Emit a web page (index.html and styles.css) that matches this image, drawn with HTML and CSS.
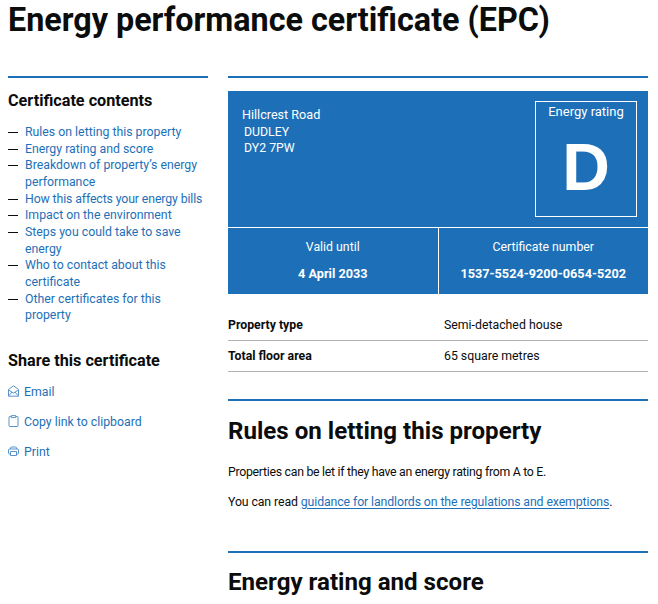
FILE: index.html
```html
<!DOCTYPE html>
<html lang="en">

<head>
    <meta charset="UTF-8">
    <meta name="viewport" content="width=device-width, initial-scale=1.0">
    <title>Energy performance certificate (EPC)</title>
    <link rel="stylesheet" href="styles.css">
</head>

<body>
    <h1 class="page-title">Energy performance certificate (EPC)</h1>

    <div class="columns">
        <nav class="sidebar">
            <h2 class="sidebar-title">Certificate contents</h2>
            <ul class="contents">
                <li><a href="#">Rules on letting this property</a></li>
                <li><a href="#">Energy rating and score</a></li>
                <li><a href="#">Breakdown of property’s energy performance</a></li>
                <li><a href="#" class="tight">How this affects your energy bills</a></li>
                <li><a href="#">Impact on the environment</a></li>
                <li><a href="#">Steps you could take to save energy</a></li>
                <li><a href="#">Who to contact about this certificate</a></li>
                <li><a href="#">Other certificates for this property</a></li>
            </ul>

            <h2 class="sidebar-title share-title">Share this certificate</h2>
            <ul class="share">
                <li>
                    <svg class="share-icon" viewBox="0 0 11 12" aria-hidden="true">
                        <path d="M0.5 4.5L5.5 0.8L10.5 4.5V11.2H0.5Z M0.5 5L5.5 8L10.5 5 M0.5 11L4 7 M10.5 11L7 7" />
                    </svg>
                    <a href="#">Email</a>
                </li>
                <li>
                    <svg class="share-icon" viewBox="0 0 11 12" aria-hidden="true">
                        <path d="M3.2 1.5H1.8Q1 1.5 1 2.3V10.7Q1 11.5 1.8 11.5H9.2Q10 11.5 10 10.7V2.3Q10 1.5 9.2 1.5H7.8 M3.2 0.6H7.8V2.6H3.2Z" />
                    </svg>
                    <a href="#">Copy link to clipboard</a>
                </li>
                <li>
                    <svg class="share-icon" viewBox="0 0 11 12" aria-hidden="true">
                        <path d="M2.5 4V3Q2.5 2 3.5 2H7.5Q8.5 2 8.5 3V4 M2.5 9H1.5Q0.5 9 0.5 8V5Q0.5 4 1.5 4H9.5Q10.5 4 10.5 5V8Q10.5 9 9.5 9H8.5 M2.5 6.5H8.5V10.5H2.5Z" />
                    </svg>
                    <a href="#">Print</a>
                </li>
            </ul>
        </nav>

        <main class="content">
            <div class="epc-panel">
                <div class="epc-top">
                    <p class="address">
                        <span class="address-first">Hillcrest Road</span><br>
                        DUDLEY<br>
                        DY2 7PW
                    </p>
                    <div class="rating-box">
                        <div class="rating-label">Energy rating</div>
                        <div class="rating-letter">D</div>
                    </div>
                </div>
                <div class="epc-bottom">
                    <div class="epc-cell">
                        <div>Valid until</div>
                        <strong>4 April 2033</strong>
                    </div>
                    <div class="epc-cell">
                        <div>Certificate number</div>
                        <strong>1537-5524-9200-0654-5202</strong>
                    </div>
                </div>
            </div>

            <dl class="summary">
                <div class="summary-row">
                    <dt>Property type</dt>
                    <dd>Semi-detached house</dd>
                </div>
                <div class="summary-row">
                    <dt>Total floor area</dt>
                    <dd>65 square metres</dd>
                </div>
            </dl>

            <section class="section">
                <h2 class="section-title">Rules on letting this property</h2>
                <p class="narrow">Properties can be let if they have an energy rating from A to E.</p>
                <p class="guidance">You can read <a href="#">guidance for landlords on the regulations and exemptions</a>.</p>
            </section>

            <section class="section">
                <h2 class="section-title">Energy rating and score</h2>
            </section>
        </main>
    </div>
</body>

</html>
```

FILE: styles.css
```css
body {
    margin: 0;
    padding: 0 10px 0 8px;
    background-color: #fff;
    color: #0b0c0c;
    font-family: Roboto, "Liberation Sans", sans-serif;
    font-size: 12.3px;
    line-height: 16.65px;
}

a {
    color: #1d70b8;
    text-decoration: none;
}

.tight {
    letter-spacing: -0.12px;
}

.page-title {
    margin: 0;
    height: 76px;
    font-size: 32.3px;
    line-height: 40px;
    font-weight: 700;
}

.columns {
    display: flex;
    gap: 20px;
}

.sidebar {
    flex: 0 0 200px;
    border-top: 2px solid #1d70b8;
}

.sidebar-title {
    margin: 13px 0 13px;
    font-size: 16.2px;
    line-height: 20px;
    font-weight: 700;
}

.share-title {
    margin-top: 27px;
}

.contents,
.share {
    margin: 0;
    padding: 0;
    list-style: none;
}

.contents li {
    position: relative;
    padding-left: 17px;
}

.contents li::before {
    content: '';
    position: absolute;
    left: 0;
    top: 8px;
    width: 10px;
    height: 1px;
    background-color: #0b0c0c;
}

.share {
    margin-top: -7px;
}

.share li {
    display: flex;
    align-items: center;
    height: 30px;
    gap: 5px;
}

.share-icon {
    flex: 0 0 11px;
    width: 11px;
    height: 12px;
    margin-top: -1px;
    fill: none;
    stroke: #5a94c8;
    stroke-width: 1;
}

.content {
    flex: 0 0 420px;
    border-top: 2px solid #1d70b8;
    padding-top: 13px;
}

.epc-panel {
    background-color: #1d70b8;
    color: #fff;
}

.epc-top {
    display: flex;
    justify-content: space-between;
    height: 137px;
    box-sizing: border-box;
    padding: 10px 11px 9px 14px;
    border-bottom: 1px solid #fff;
}

.address {
    margin: 6px 0 0;
    padding-left: 2px;
}

.address-first {
    margin-left: -2px;
    font-size: 12.6px;
}

.rating-box {
    width: 102px;
    height: 116px;
    box-sizing: border-box;
    border: 1px solid #fff;
    text-align: center;
}

.rating-label {
    margin-top: 2px;
    font-size: 13px;
}

.rating-letter {
    font-family: "Liberation Sans", sans-serif;
    font-size: 66px;
    line-height: 80px;
    font-weight: 700;
    margin-top: 6px;
}

.epc-bottom {
    display: flex;
    height: 66px;
}

.epc-cell {
    flex: 1;
    box-sizing: border-box;
    padding-top: 11px;
    text-align: center;
}

.epc-cell+.epc-cell {
    border-left: 1px solid #fff;
}

.epc-cell strong {
    display: block;
    margin-top: 10px;
    font-size: 12.7px;
}

.summary {
    margin: 15px 0 0;
}

.summary-row {
    display: flex;
    padding: 7.5px 0 6.8px;
    border-bottom: 1px solid #b1b4b6;
}

.summary-row:last-child {
    padding-bottom: 5.8px;
}

.summary-row dt {
    flex: 0 0 216px;
    font-weight: 700;
}

.summary-row dd {
    margin: 0;
}

.section {
    margin-top: 27px;
    border-top: 2px solid #1d70b8;
}

.section-title {
    margin: 15px 0 0;
    font-size: 24.1px;
    line-height: 30px;
    font-weight: 700;
}

.section p {
    margin: 18px 0 0;
}

.section p+p {
    margin-top: 13px;
}

.section p.narrow {
    letter-spacing: -0.28px;
}

.section p.guidance {
    letter-spacing: -0.1px;
}

.section p a {
    text-decoration: underline;
    text-underline-offset: 2px;
}

.section+.section {
    margin-top: 41px;
}

.section+.section .section-title {
    margin-top: 14px;
}
```
